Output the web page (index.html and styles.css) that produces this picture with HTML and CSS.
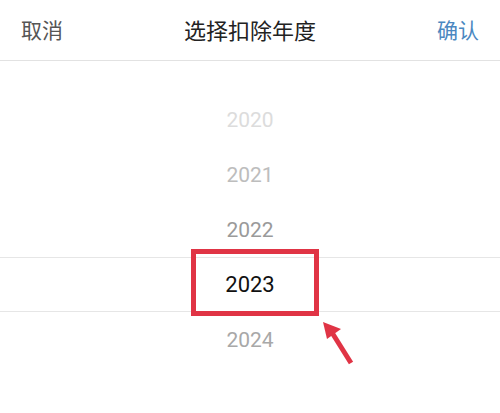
FILE: index.html
```html
<!DOCTYPE html>
<html lang="zh-CN">

<head>
  <meta charset="UTF-8">
  <meta name="viewport" content="width=device-width, initial-scale=1.0">
  <title>选择扣除年度</title>
  <link rel="stylesheet" href="styles.css">
</head>

<body>
  <div class="sheet">
    <div class="header">
      <span class="cancel">取消</span>
      <span class="title">选择扣除年度</span>
      <span class="ok">确认</span>
    </div>
    <div class="picker">
      <div class="row far">2020</div>
      <div class="row mid">2021</div>
      <div class="row near">2022</div>
      <div class="row selected">2023</div>
      <div class="row near2">2024</div>
      <!-- 红框和箭头标注 -->
      <div class="mark"></div>
      <svg class="arrow" width="40" height="50" viewBox="0 0 40 50">
        <line x1="11" y1="11" x2="31" y2="43" stroke="#e03445" stroke-width="5" stroke-linecap="butt" />
        <polygon points="3,2 21,9 7,19" fill="#e03445" />
      </svg>
    </div>
  </div>
</body>

</html>
```

FILE: styles.css
```css
* {
  padding: 0;
  margin: 0;
  box-sizing: border-box;
}

body {
  background: #fff;
  font-family: "Noto Sans CJK SC", "Noto Sans", sans-serif;
}

.sheet {
  width: 500px;
  height: 413px;
  overflow: hidden;
}

.header {
  height: 61px;
  display: flex;
  align-items: center;
  justify-content: space-between;
  padding: 0 21px 2px 21px;
  border-bottom: 1px solid #e2e2e2;
  font-size: 21px;
}

.cancel {
  color: #555;
}

.title {
  color: #222;
  font-size: 22px;
}

.ok {
  color: #4b88c1;
}

.picker {
  position: relative;
  padding-top: 31px;
}

.row {
  height: 55px;
  display: flex;
  align-items: center;
  justify-content: center;
  font-family: Roboto, sans-serif;
  font-size: 21px;
}

.far {
  color: #dcdcdc;
}

.mid {
  color: #bdbdbd;
}

.near {
  color: #9a9a9a;
}

.selected {
  color: #111;
  font-size: 22px;
  border-top: 1px solid #e6e6e6;
  border-bottom: 1px solid #e6e6e6;
}

.near2 {
  color: #a8a8a8;
}

.mark {
  position: absolute;
  left: 191px;
  top: 188px;
  width: 128px;
  height: 67px;
  border: 5px solid #e03445;
}

.arrow {
  position: absolute;
  left: 320px;
  top: 259px;
}
```
